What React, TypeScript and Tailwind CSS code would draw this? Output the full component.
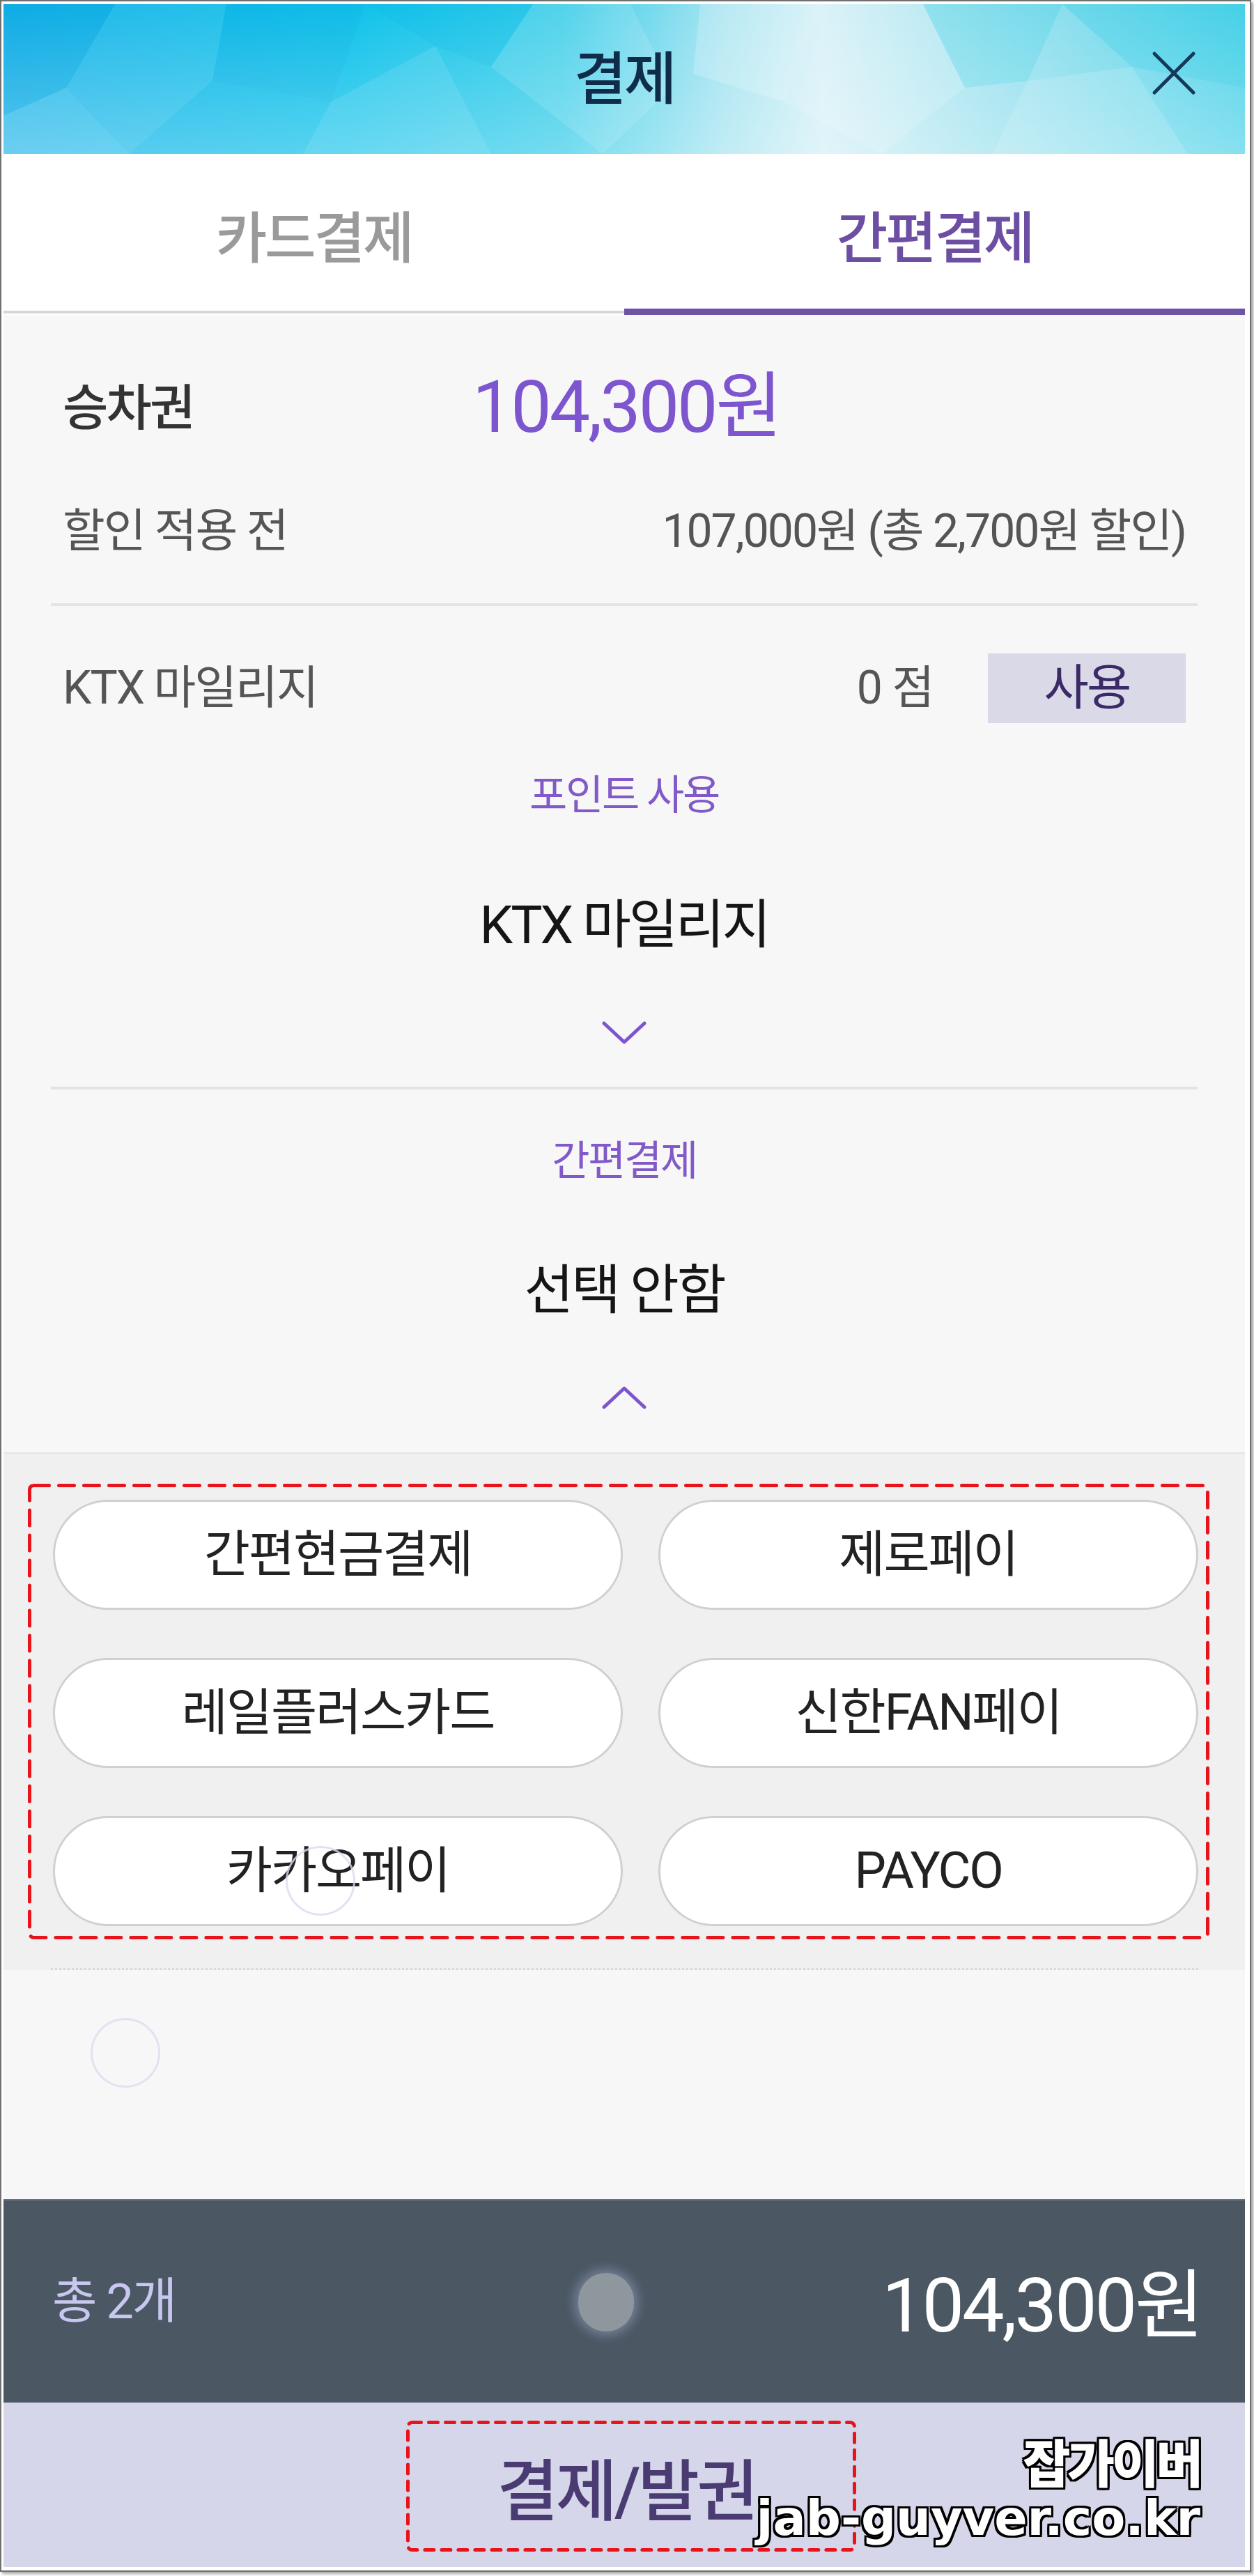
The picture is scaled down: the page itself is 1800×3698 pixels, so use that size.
import React from "react";

function HeaderBg() {
  return (
    <svg className="absolute inset-0 h-full w-full" viewBox="0 0 1782 215" preserveAspectRatio="none">
      <defs>
        <linearGradient id="hg" x1="0" y1="0" x2="1" y2="0">
          <stop offset="0" stopColor="#10b0e8" />
          <stop offset="0.28" stopColor="#0fc2ea" />
          <stop offset="0.45" stopColor="#3acde9" />
          <stop offset="0.58" stopColor="#a6e4f1" />
          <stop offset="0.66" stopColor="#d4f0f7" />
          <stop offset="0.8" stopColor="#9fe2ef" />
          <stop offset="1" stopColor="#52d3e9" />
        </linearGradient>
        <linearGradient id="hv" x1="0" y1="0" x2="0" y2="1">
          <stop offset="0" stopColor="#ffffff" stopOpacity="0" />
          <stop offset="1" stopColor="#ffffff" stopOpacity="0.3" />
        </linearGradient>
      </defs>
      <rect width="1782" height="215" fill="url(#hg)" />
      <polygon points="0,0 160,0 90,120 0,160" fill="#0a9fdc" opacity="0.25" />
      <polygon points="160,0 320,0 300,110 180,215 90,120" fill="#ffffff" opacity="0.08" />
      <polygon points="320,0 520,0 470,140 300,110" fill="#0aa8df" opacity="0.22" />
      <polygon points="470,140 620,60 700,215 430,215" fill="#ffffff" opacity="0.1" />
      <polygon points="520,0 760,0 700,90 620,60" fill="#02b8e6" opacity="0.25" />
      <polygon points="760,0 900,0 960,120 860,215 700,90" fill="#ffffff" opacity="0.12" />
      <polygon points="0,160 90,120 180,215 0,215" fill="#ffffff" opacity="0.12" />
      <polygon points="1000,0 1180,0 1120,140 990,100" fill="#ffffff" opacity="0.2" />
      <polygon points="1180,0 1320,0 1380,120 1260,215 1120,140" fill="#ffffff" opacity="0.15" />
      <polygon points="1320,0 1520,0 1470,110 1380,120" fill="#3ccfe6" opacity="0.3" />
      <polygon points="1520,0 1782,0 1782,120 1620,90" fill="#27cbe6" opacity="0.3" />
      <polygon points="1470,110 1620,90 1700,215 1420,215" fill="#ffffff" opacity="0.15" />
      <rect width="1782" height="215" fill="url(#hv)" />
    </svg>
  );
}

function DashedBox({ className, dash }: { className: string; dash: string }) {
  return (
    <div className={"pointer-events-none absolute " + className}>
      <svg className="h-full w-full overflow-visible">
        <rect
          x="2.5"
          y="2.5"
          width="calc(100% - 5px)"
          height="calc(100% - 5px)"
          rx="6"
          fill="none"
          stroke="#e8141c"
          strokeWidth="5"
          strokeDasharray={dash}
          strokeLinecap="round"
        />
      </svg>
    </div>
  );
}

function Chevron({ up }: { up?: boolean }) {
  return (
    <svg width="66" height="34" viewBox="0 0 66 34" className="block">
      <polyline
        points={up ? "4,31 33,4 62,31" : "4,3 33,30 62,3"}
        fill="none"
        stroke="#7d55cc"
        strokeWidth="5"
        strokeLinecap="round"
        strokeLinejoin="round"
      />
    </svg>
  );
}

const payments = ["간편현금결제", "제로페이", "레일플러스카드", "신한FAN페이", "카카오페이", "PAYCO"];

const outline =
  "[text-shadow:-3px_-3px_0_#000,3px_-3px_0_#000,-3px_3px_0_#000,3px_3px_0_#000,0_3px_0_#000,0_-3px_0_#000,3px_0_0_#000,-3px_0_0_#000]";

export default function App() {
  return (
    <div className="h-[3698px] w-[1800px] bg-white font-['Roboto','Noto_Sans_CJK_KR',sans-serif]">
      <div className="h-[3692px] w-[1796px] border-2 border-[#707070] bg-white pb-[5px] pl-[3px] pr-[7px] pt-[4px] shadow-[3px_3px_4px_rgba(0,0,0,0.35)]">
        <div className="relative flex h-full w-full flex-col bg-[#f7f7f7]">
          {/* Header */}
          <div className="relative flex h-[215px] shrink-0 items-center justify-center overflow-hidden">
            <HeaderBg />
            <span className="relative text-[82px] font-medium leading-none tracking-[-0.04em] text-[#0f2d4a]">결제</span>
            <svg className="absolute right-[70px] top-[67px]" width="64" height="64" viewBox="0 0 64 64">
              <path d="M4 4 L60 60 M60 4 L4 60" stroke="#143a58" strokeWidth="5" strokeLinecap="round" />
            </svg>
          </div>

          {/* Tabs */}
          <div className="flex h-[231px] shrink-0 bg-white">
            <div className="relative flex flex-1 items-center justify-center">
              <span className="mt-[12px] text-[80px] font-medium leading-none tracking-[-0.04em] text-[#9a9a9a]">카드결제</span>
              <div className="absolute bottom-[2px] left-0 right-0 h-[4px] bg-[#d6d6d6]" />
            </div>
            <div className="relative flex flex-1 items-center justify-center">
              <span className="mt-[12px] text-[80px] font-medium leading-none tracking-[-0.04em] text-[#6c4fa3]">간편결제</span>
              <div className="absolute bottom-0 left-0 right-0 h-[9px] bg-[#6d53a5]" />
            </div>
          </div>

          {/* Main */}
          <div className="flex h-[1633px] shrink-0 flex-col bg-[#f7f7f7]">
            <div className="mt-[68px] flex h-[130px] items-center pl-[85px]">
              <span className="w-[588px] text-[71px] font-medium leading-none tracking-[-0.04em] text-[#333333]">승차권</span>
              <span className="text-[104px] leading-none tracking-[-0.03em] text-[#7d55cf]">104,300원</span>
            </div>
            <div className="mt-[63px] flex h-[100px] items-center justify-between px-[85px] text-[66px] leading-none tracking-[-0.03em] text-[#555555]">
              <span>할인 적용 전</span>
              <span>107,000원 (총 2,700원 할인)</span>
            </div>
            <div className="mx-[68px] mt-[53px] h-[4px] bg-[#e3e3e3]" />
            <div className="mt-[68px] flex h-[100px] items-center justify-between pl-[85px] pr-[85px]">
              <span className="text-[66px] leading-none tracking-[-0.03em] text-[#555555]">KTX 마일리지</span>
              <div className="flex items-center gap-[78px]">
                <span className="text-[66px] leading-none tracking-[-0.02em] text-[#555555]">0 점</span>
                <div className="flex h-[100px] w-[284px] items-center justify-center bg-[#d9d9e8]">
                  <span className="text-[70px] leading-none tracking-[-0.04em] text-[#3b2a66]">사용</span>
                </div>
              </div>
            </div>
            <div className="mt-[73px] flex h-[60px] items-center justify-center">
              <span className="text-[59px] leading-none tracking-[-0.04em] text-[#8159c8]">포인트 사용</span>
            </div>
            <div className="mt-[117px] flex h-[80px] items-center justify-center">
              <span className="text-[76px] leading-none tracking-[-0.04em] text-[#151515]">KTX 마일리지</span>
            </div>
            <div className="mt-[98px] flex h-[34px] justify-center">
              <Chevron />
            </div>
            <div className="mx-[68px] mt-[60px] h-[4px] bg-[#e3e3e3]" />
            <div className="mt-[72px] flex h-[60px] items-center justify-center">
              <span className="text-[59px] leading-none tracking-[-0.04em] text-[#8159c8]">간편결제</span>
            </div>
            <div className="mt-[117px] flex h-[80px] items-center justify-center">
              <span className="text-[77px] leading-none tracking-[-0.04em] text-[#151515]">선택 안함</span>
            </div>
            <div className="mt-[96px] flex h-[34px] justify-center">
              <Chevron up />
            </div>
          </div>

          {/* Payment options */}
          <div className="relative h-[743px] shrink-0 border-t-2 border-[#e4e4e4] bg-[#f0f0f0] pl-[71px] pt-[66px]">
            <div className="grid grid-cols-[818px_775px] gap-x-[51px] gap-y-[69px]">
              {payments.map((p) => (
                <div
                  key={p}
                  className="flex h-[158px] items-center justify-center rounded-full border-[3px] border-[#d0d0d0] bg-white"
                >
                  <span className="text-[72px] leading-none tracking-[-0.03em] text-[#222222]">{p}</span>
                </div>
              ))}
            </div>
            <div className="absolute bottom-0 left-[68px] right-[67px] border-t-[3px] border-dotted border-[#d9d9d9]" />
            <div className="pointer-events-none absolute left-[405px] top-[563px] h-[100px] w-[100px] rounded-full border-[3px] border-[#d9dbef]/80" />
            <DashedBox className="left-[35px] top-[43px] h-[654px] w-[1696px]" dash="22 14" />
          </div>

          {/* Empty area */}
          <div className="relative h-[329px] shrink-0 bg-[#f7f7f7]">
            <div className="pointer-events-none absolute left-[125px] top-[69px] h-[100px] w-[100px] rounded-full border-[3px] border-[#e1e2f2]" />
          </div>

          {/* Summary bar */}
          <div className="relative flex h-[292px] shrink-0 items-center justify-between border-t-2 border-[#66717b] bg-[#4b5864] pl-[70px] pr-[62px]">
            <span className="text-[70px] leading-none tracking-[-0.03em] text-[#c8c7f0]">총 2개</span>
            <span className="mt-[12px] text-[108px] leading-none tracking-[-0.03em] text-white">104,300원</span>
            <div className="pointer-events-none absolute left-[825px] top-[104px] h-[84px] w-[80px] rounded-full bg-[#8e979e] shadow-[0_0_14px_6px_rgba(190,195,235,0.35)]" />
          </div>

          {/* Pay button */}
          <div className="relative flex h-[236px] shrink-0 items-center justify-center bg-[#d6d6ea]">
            <span className="ml-[6px] mt-[20px] text-[96px] font-medium leading-none tracking-[-0.04em] text-[#4a3c72]">결제/발권</span>
            <DashedBox className="left-[578px] top-[26px] h-[188px] w-[646px]" dash="13 11" />
            <div className="pointer-events-none absolute right-[64px] top-[52px] flex flex-col items-end">
              <span className={"text-[74px] font-black leading-[76px] tracking-[-0.06em] text-white " + outline}>
                잡가이버
              </span>
              <span className={"font-['DejaVu_Sans',sans-serif] text-[70px] font-bold leading-[76px] tracking-[0em] text-white " + outline}>
                jab-guyver.co.kr
              </span>
            </div>
          </div>
        </div>
      </div>
    </div>
  );
}
